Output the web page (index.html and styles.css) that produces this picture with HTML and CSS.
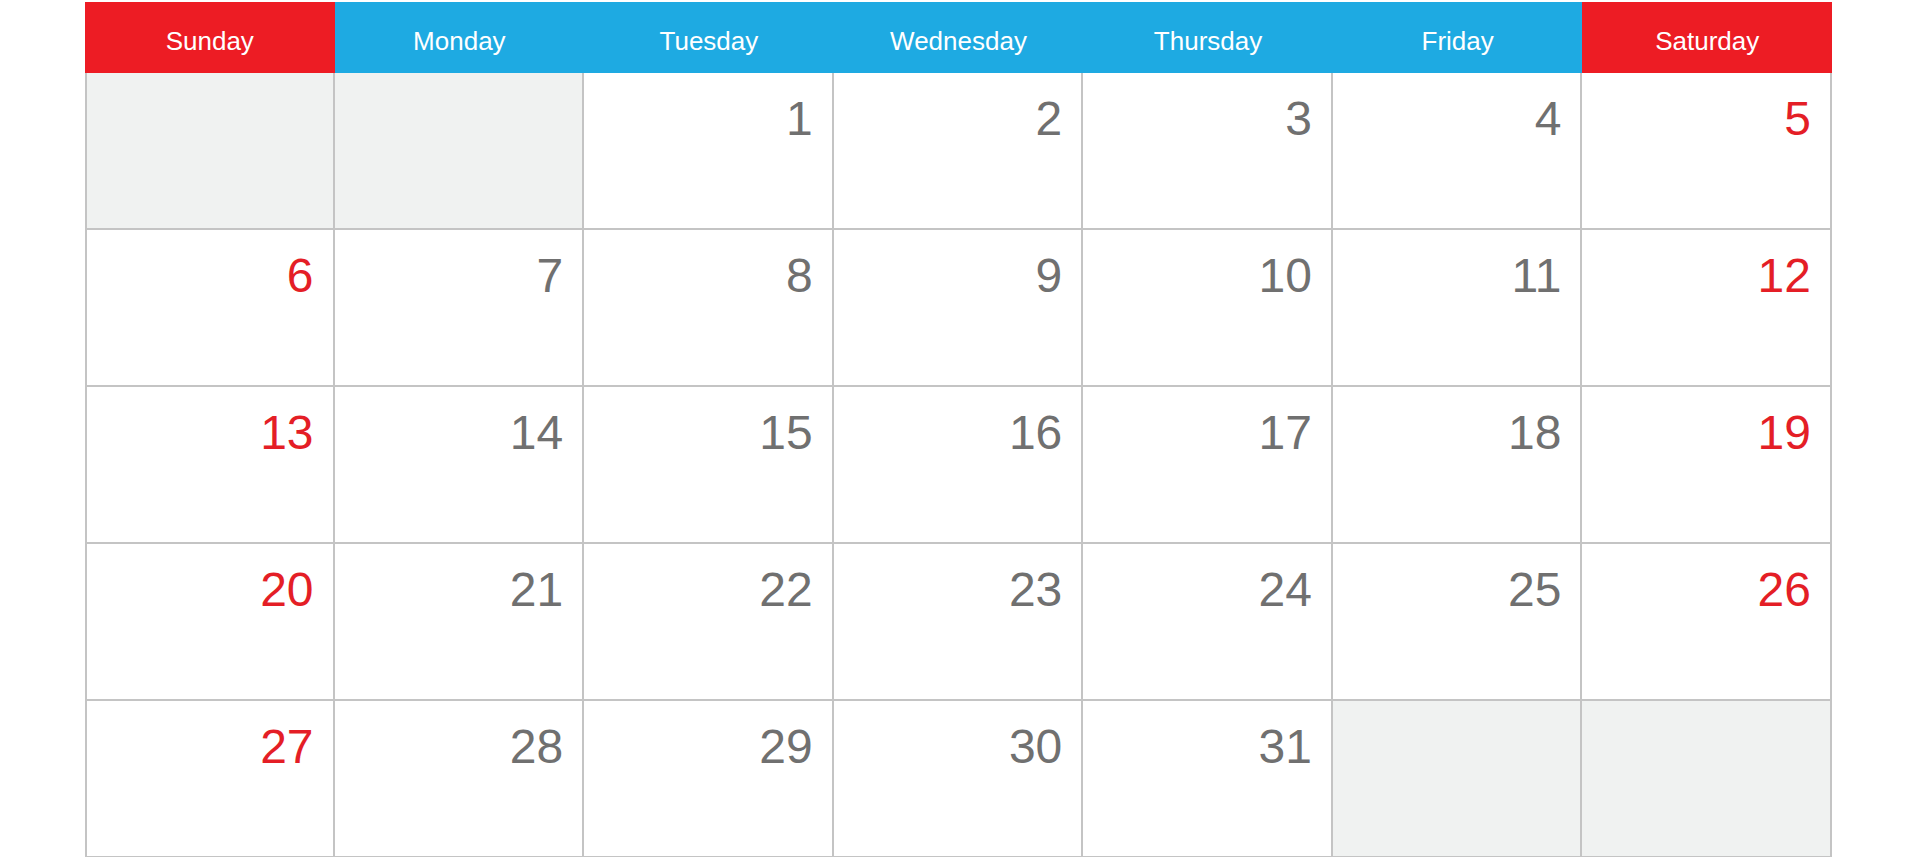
FILE: index.html
```html
<!DOCTYPE html>
<html lang="en">
<head>
<meta charset="utf-8">
<title>Calendar</title>
<link rel="stylesheet" href="styles.css">
</head>
<body>
<div class="calendar">
  <div class="head weekend">Sunday</div>
  <div class="head">Monday</div>
  <div class="head">Tuesday</div>
  <div class="head">Wednesday</div>
  <div class="head">Thursday</div>
  <div class="head">Friday</div>
  <div class="head weekend">Saturday</div>

  <div class="cell empty"></div>
  <div class="cell empty"></div>
  <div class="cell">1</div>
  <div class="cell">2</div>
  <div class="cell">3</div>
  <div class="cell">4</div>
  <div class="cell red">5</div>

  <div class="cell red">6</div>
  <div class="cell">7</div>
  <div class="cell">8</div>
  <div class="cell">9</div>
  <div class="cell">10</div>
  <div class="cell">11</div>
  <div class="cell red">12</div>

  <div class="cell red">13</div>
  <div class="cell">14</div>
  <div class="cell">15</div>
  <div class="cell">16</div>
  <div class="cell">17</div>
  <div class="cell">18</div>
  <div class="cell red">19</div>

  <div class="cell red">20</div>
  <div class="cell">21</div>
  <div class="cell">22</div>
  <div class="cell">23</div>
  <div class="cell">24</div>
  <div class="cell">25</div>
  <div class="cell red">26</div>

  <div class="cell red">27</div>
  <div class="cell">28</div>
  <div class="cell">29</div>
  <div class="cell">30</div>
  <div class="cell">31</div>
  <div class="cell empty"></div>
  <div class="cell empty"></div>
</div>
</body>
</html>
```

FILE: styles.css
```css
html, body {
  margin: 0;
  padding: 0;
  background: #ffffff;
  overflow: hidden;
}

body {
  font-family: "Liberation Sans", Arial, sans-serif;
}

.calendar {
  margin: 2px 0 0 85px;
  width: 1747px;
  display: grid;
  grid-template-columns: repeat(7, 1fr);
  grid-template-rows: 71px repeat(5, 157px);
}

.head {
  background: #1eaae2;
  color: #ffffff;
  font-size: 26px;
  line-height: 26px;
  text-align: center;
  padding-top: 26px;
  box-sizing: border-box;
}

.head.weekend {
  background: #ed1c24;
}

.cell {
  border-right: 2px solid #c4c4c4;
  border-bottom: 2px solid #c4c4c4;
  box-sizing: border-box;
  color: #707070;
  font-size: 48px;
  line-height: 48px;
  text-align: right;
  padding: 22px 19px 0 0;
  background: #ffffff;
}

.cell:nth-child(7n+1) {
  border-left: 2px solid #c4c4c4;
}

.cell.red {
  color: #e41e26;
}

.cell.empty {
  background: #f0f2f1;
}
```
